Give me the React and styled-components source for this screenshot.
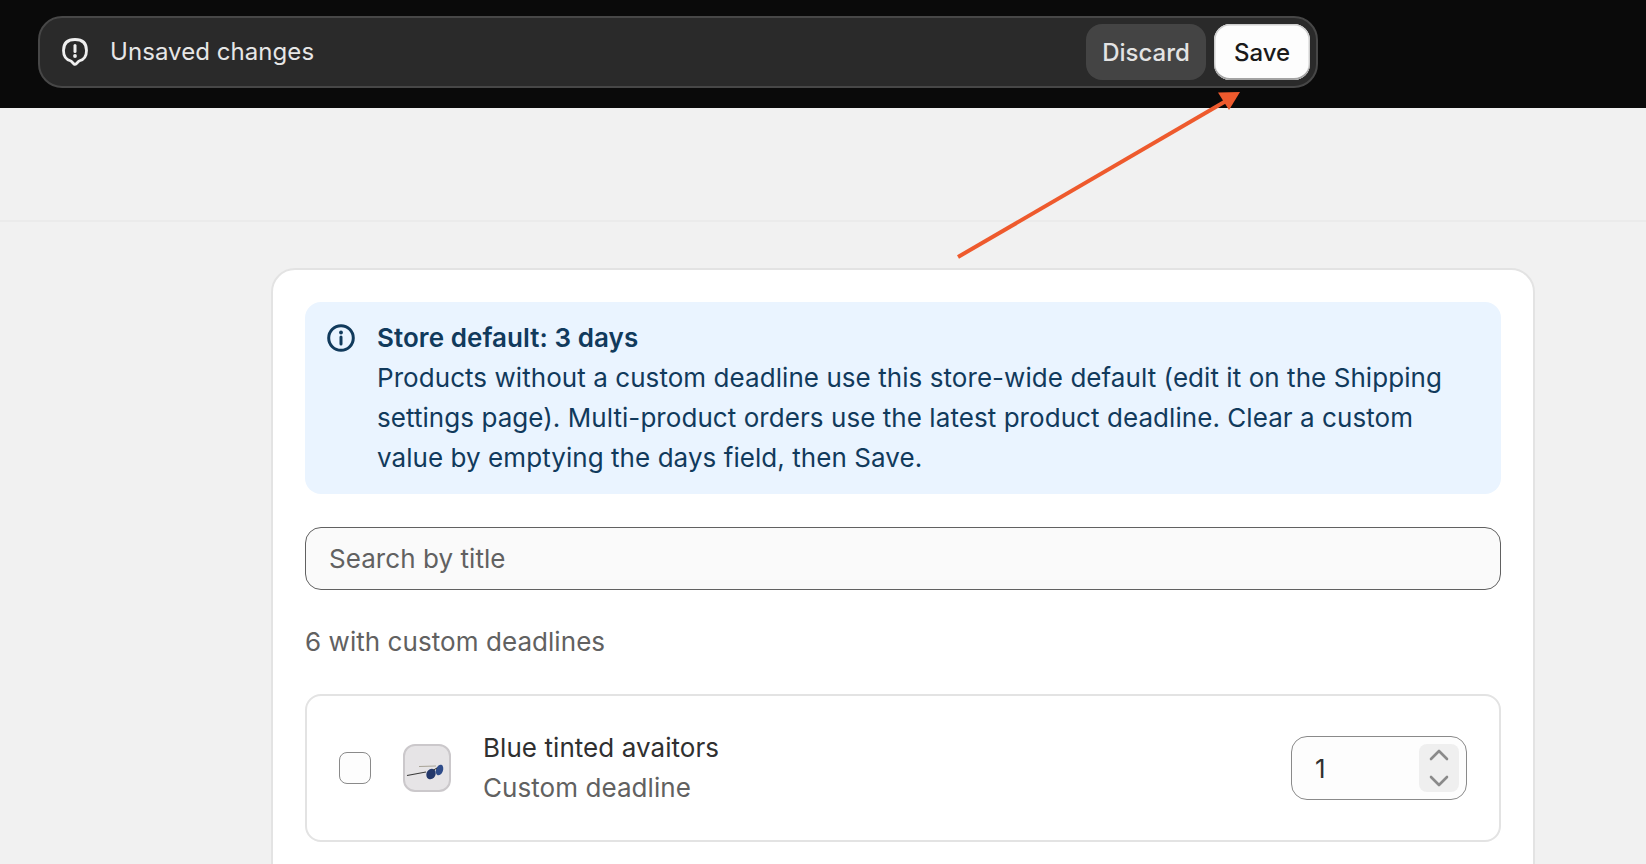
import styled, { createGlobalStyle } from 'styled-components';

const GlobalStyle = createGlobalStyle`
  html, body {
    margin: 0;
    height: 100%;
    overflow: hidden;
    background: #f1f1f1;
    font-family: Inter, "Liberation Sans", sans-serif;
    font-size: 26px;
    letter-spacing: 0.06px;
    color: #303030;
  }
`;

const Page = styled.div`
  position: relative;
  height: 864px;
  overflow: hidden;
`;

const TopBar = styled.div`
  height: 108px;
  box-sizing: border-box;
  padding: 16px 38px;
  background: #0a0a0a;
`;

const SaveBar = styled.div`
  width: 1280px;
  height: 72px;
  box-sizing: border-box;
  display: flex;
  align-items: center;
  padding: 0 6px 0 21px;
  gap: 8px;
  background: #2a2a2a;
  border: 2px solid #474747;
  border-radius: 24px;
  font-size: 24px;
`;

const BarMessage = styled.div`
  flex: 1;
  display: flex;
  align-items: center;
  gap: 21px;
  padding-bottom: 1px;
  color: #e6e6e6;
`;

const BarButton = styled.button`
  height: 56px;
  width: ${(p) => (p.$primary ? '96px' : '120px')};
  padding: 0;
  border: 0;
  border-radius: 16px;
  font: inherit;
  font-weight: 500;
  color: ${(p) => (p.$primary ? '#1a1a1a' : '#e3e3e3')};
  background: ${(p) => (p.$primary ? '#fdfdfd' : '#444444')};
  box-shadow: ${(p) => (p.$primary ? 'inset 0 -2px 0 #a3a3a3, inset 0 0 0 1.5px #cfcfcf' : 'none')};
`;

const HeaderArea = styled.div`
  height: 114px;
  box-sizing: border-box;
  border-bottom: 2px solid #ebebeb;
`;

const Main = styled.div`
  padding: 46px 111px 0 271px;
`;

const Card = styled.section`
  box-sizing: border-box;
  min-height: 700px;
  padding: 32px;
  background: #fff;
  border: 2px solid #e3e3e3;
  border-radius: 24px;
`;

const Banner = styled.div`
  display: flex;
  gap: 22px;
  padding: 16px 32px 16px 22px;
  background: #eaf4ff;
  border-radius: 16px;
  color: #113a5c;
  line-height: 40px;
`;

const BannerIcon = styled.div`
  flex: none;
  height: 40px;
  display: flex;
  align-items: center;
`;

const BannerTitle = styled.div`
  font-weight: 600;
`;

const SearchField = styled.input`
  display: block;
  width: 100%;
  height: 63px;
  box-sizing: border-box;
  margin-top: 33px;
  padding: 0 23px;
  font: inherit;
  letter-spacing: inherit;
  color: #303030;
  background: #fafafa;
  border: 1.5px solid #616161;
  border-radius: 16px;
  &::placeholder {
    color: #616161;
    opacity: 1;
  }
`;

const CountLabel = styled.div`
  margin-top: 32px;
  line-height: 40px;
  color: #616161;
`;

const ProductRow = styled.div`
  display: flex;
  align-items: center;
  height: 148px;
  box-sizing: border-box;
  margin-top: 32px;
  padding: 0 32px;
  background: #fff;
  border: 2px solid #e3e3e3;
  border-radius: 16px;
`;

const Checkbox = styled.span`
  flex: none;
  width: 32px;
  height: 32px;
  box-sizing: border-box;
  background: #fdfdfd;
  border: 1.5px solid #8a8a8a;
  border-radius: 8px;
`;

const Thumb = styled.div`
  flex: none;
  width: 48px;
  height: 48px;
  margin-left: 32px;
  box-sizing: border-box;
  overflow: hidden;
  background: #e6e4e6;
  border: 2px solid #cbc8cb;
  border-radius: 12px;
`;

const ThumbArt = styled.svg`
  display: block;
  filter: blur(0.4px);
`;

const ProductText = styled.div`
  flex: 1;
  margin-left: 32px;
  line-height: 40px;
`;

const ProductTitle = styled.div`
  color: #303030;
`;

const ProductNote = styled.div`
  color: #616161;
`;

const NumberField = styled.div`
  flex: none;
  width: 176px;
  height: 64px;
  box-sizing: border-box;
  display: flex;
  align-items: center;
  justify-content: space-between;
  padding: 0 7px 0 23px;
  background: #fdfdfd;
  border: 1.5px solid #8a8a8a;
  border-radius: 16px;
`;

const Stepper = styled.div`
  width: 40px;
  height: 48px;
  display: flex;
  flex-direction: column;
  align-items: center;
  justify-content: space-between;
  padding: 5px 0;
  box-sizing: border-box;
  background: #efefef;
  border-radius: 8px;
`;

const ArrowLayer = styled.svg`
  position: absolute;
  left: 0;
  top: 0;
  pointer-events: none;
`;

const AlertIcon = () => (
  <svg width="28" height="30" viewBox="0 0 28 30" fill="none">
    <path
      d="M14 2.500c7.500 0 11.500 4 11.500 11 0 6-3 9.500-7.500 10.500l-3 3a1.400 1.400 0 0 1-2 0l-3-3C6 23 2.500 19.500 2.500 13.500c0-7 4-11 11.500-11Z"
      stroke="#efefef"
      strokeWidth="2.800"
      strokeLinejoin="round"
    />
    <path d="M14 8.500v6" stroke="#efefef" strokeWidth="3" strokeLinecap="round" />
    <circle cx="14" cy="19" r="1.900" fill="#efefef" />
  </svg>
);

const InfoIcon = () => (
  <svg width="28" height="28" viewBox="0 0 28 28" fill="none">
    <circle cx="14" cy="14" r="12.300" stroke="#113a5c" strokeWidth="3" />
    <path d="M14 13v7" stroke="#113a5c" strokeWidth="3" strokeLinecap="round" />
    <circle cx="14" cy="8.500" r="1.900" fill="#113a5c" />
  </svg>
);

const Chevron = ({ up }) => (
  <svg width="20" height="12" viewBox="0 0 20 12" fill="none">
    <path
      d={up ? 'M2 10l8-8 8 8' : 'M2 2l8 8 8-8'}
      stroke="#8a8a8a"
      strokeWidth="2.600"
      strokeLinecap="round"
      strokeLinejoin="round"
    />
  </svg>
);

const Sunglasses = () => (
  <ThumbArt width="44" height="44" viewBox="0 0 44 44" fill="none">
    <path d="M2 29.500L21 26" stroke="#3a3a3a" strokeWidth="1.200" />
    <path d="M14 20.500L31 20" stroke="#a8a396" strokeWidth="1.100" />
    <ellipse cx="26" cy="28" rx="4.500" ry="5.500" transform="rotate(25 26 28)" fill="#24386b" />
    <ellipse cx="34.500" cy="24" rx="3.500" ry="5.500" transform="rotate(20 34.500 24)" fill="#2f4c8a" />
    <path d="M28.500 24l3.500-2" stroke="#2a2a2a" strokeWidth="1" />
  </ThumbArt>
);

const App = () => (
  <Page>
    <GlobalStyle />
    <TopBar>
      <SaveBar>
        <BarMessage>
          <AlertIcon />
          Unsaved changes
        </BarMessage>
        <BarButton>Discard</BarButton>
        <BarButton $primary>Save</BarButton>
      </SaveBar>
    </TopBar>
    <HeaderArea />
    <Main>
      <Card>
        <Banner>
          <BannerIcon>
            <InfoIcon />
          </BannerIcon>
          <div>
            <BannerTitle>Store default: 3 days</BannerTitle>
            Products without a custom deadline use this store-wide default (edit it on the Shipping settings page). Multi-product orders use the latest product deadline. Clear a custom value by emptying the days field, then Save.
          </div>
        </Banner>
        <SearchField placeholder="Search by title" />
        <CountLabel>6 with custom deadlines</CountLabel>
        <ProductRow>
          <Checkbox />
          <Thumb>
            <Sunglasses />
          </Thumb>
          <ProductText>
            <ProductTitle>Blue tinted avaitors</ProductTitle>
            <ProductNote>Custom deadline</ProductNote>
          </ProductText>
          <NumberField>
            1
            <Stepper>
              <Chevron up />
              <Chevron />
            </Stepper>
          </NumberField>
        </ProductRow>
      </Card>
    </Main>
    <ArrowLayer width="1646" height="864" viewBox="0 0 1646 864">
      <path d="M958 257L1226 101" stroke="#ee5a2d" strokeWidth="4" />
      <path d="M1240 92L1218 92.500L1229 110Z" fill="#ee5a2d" />
    </ArrowLayer>
  </Page>
);

export default App;
